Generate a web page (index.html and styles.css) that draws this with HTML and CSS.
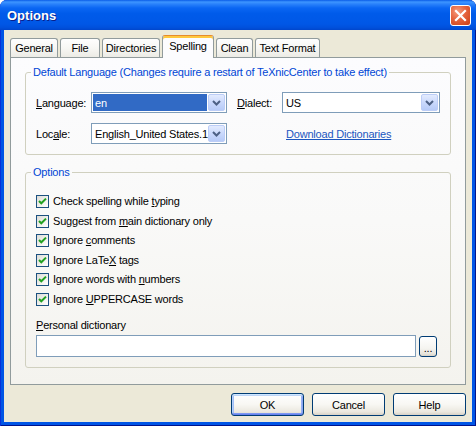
FILE: index.html
```html
<!DOCTYPE html>
<html>
<head>
<meta charset="utf-8">
<title>Options</title>
<link rel="stylesheet" href="styles.css">
</head>
<body>
<div class="window">
  <div class="titlebar">
    <span class="title">Options</span>
    <span class="close">
      <svg width="13" height="13" viewBox="0 0 13 13"><path d="M2 2 L11 11 M11 2 L2 11" stroke="#fff" stroke-width="2.2" stroke-linecap="square"/></svg>
    </span>
  </div>
  <div class="client">
    <div class="tabs">
      <div class="tab tab-general">General</div>
      <div class="tab tab-file">File</div>
      <div class="tab tab-dirs">Directories</div>
      <div class="tab tab-spelling selected">Spelling</div>
      <div class="tab tab-clean">Clean</div>
      <div class="tab tab-format">Text Format</div>
    </div>
    <div class="panel">
      <fieldset class="group group-lang">
        <legend>Default Language (Changes require a restart of TeXnicCenter to take effect)</legend>
        <div class="lang-grid">
          <span class="label"><u>L</u>anguage:</span>
          <div class="combo">
            <span class="value selected">en</span>
            <span class="arrow"><svg width="9" height="6" viewBox="0 0 9 6"><path d="M1 1 L4.5 4.5 L8 1" fill="none" stroke="#4d6185" stroke-width="2"/></svg></span>
          </div>
          <span></span>
          <span class="label"><u>D</u>ialect:</span>
          <div class="combo">
            <span class="value">US</span>
            <span class="arrow"><svg width="9" height="6" viewBox="0 0 9 6"><path d="M1 1 L4.5 4.5 L8 1" fill="none" stroke="#4d6185" stroke-width="2"/></svg></span>
          </div>
          <span class="label">Loc<u>a</u>le:</span>
          <div class="combo">
            <span class="value">English_United States.1</span>
            <span class="arrow"><svg width="9" height="6" viewBox="0 0 9 6"><path d="M1 1 L4.5 4.5 L8 1" fill="none" stroke="#4d6185" stroke-width="2"/></svg></span>
          </div>
          <span></span>
          <span></span>
          <a class="link">Download Dictionaries</a>
        </div>
      </fieldset>
      <fieldset class="group group-opts">
        <legend>Options</legend>
        <div class="checklist">
          <label class="check"><span class="cb"><svg width="11" height="11" viewBox="0 0 11 11"><path d="M2 5 L4.3 7.3 L9 2.6" fill="none" stroke="#21a121" stroke-width="2"/></svg></span><span class="ctext">Check spelling while <u>t</u>yping</span></label>
          <label class="check"><span class="cb"><svg width="11" height="11" viewBox="0 0 11 11"><path d="M2 5 L4.3 7.3 L9 2.6" fill="none" stroke="#21a121" stroke-width="2"/></svg></span><span class="ctext">Suggest from <u>m</u>ain dictionary only</span></label>
          <label class="check"><span class="cb"><svg width="11" height="11" viewBox="0 0 11 11"><path d="M2 5 L4.3 7.3 L9 2.6" fill="none" stroke="#21a121" stroke-width="2"/></svg></span><span class="ctext">Ignore <u>c</u>omments</span></label>
          <label class="check"><span class="cb"><svg width="11" height="11" viewBox="0 0 11 11"><path d="M2 5 L4.3 7.3 L9 2.6" fill="none" stroke="#21a121" stroke-width="2"/></svg></span><span class="ctext">Ignore LaTe<u>X</u> tags</span></label>
          <label class="check"><span class="cb"><svg width="11" height="11" viewBox="0 0 11 11"><path d="M2 5 L4.3 7.3 L9 2.6" fill="none" stroke="#21a121" stroke-width="2"/></svg></span><span class="ctext">Ignore words with <u>n</u>umbers</span></label>
          <label class="check"><span class="cb"><svg width="11" height="11" viewBox="0 0 11 11"><path d="M2 5 L4.3 7.3 L9 2.6" fill="none" stroke="#21a121" stroke-width="2"/></svg></span><span class="ctext">Ignore <u>U</u>PPERCASE words</span></label>
        </div>
        <div class="dict-label"><u>P</u>ersonal dictionary</div>
        <div class="dict-row">
          <div class="textbox"></div>
          <div class="browse">...</div>
        </div>
      </fieldset>
    </div>
    <div class="buttons">
      <div class="btn default">OK</div>
      <div class="btn">Cancel</div>
      <div class="btn">Help</div>
    </div>
  </div>
</div>
</body>
</html>
```
FILE: styles.css
```css
* { box-sizing: border-box; }

body {
  margin: 0;
  font-family: "Liberation Sans", Arial, sans-serif;
  font-size: 11px;
  letter-spacing: -0.2px;
  color: #000;
  background: #fff;
}

.window {
  width: 476px;
  height: 426px;
  background: #0055e5;
  border-radius: 7px 7px 0 0;
  display: flex;
  flex-direction: column;
  overflow: hidden;
  box-shadow: inset 1px 0 #0831d9, inset -1px 0 #00138c, inset 0 -1px #00138c;
}

.titlebar {
  height: 30px;
  flex: none;
  display: flex;
  align-items: center;
  padding: 0 5px 0 7px;
  background: linear-gradient(to bottom, #0a5ce8 0, #3d95ff 2px, #2a82fb 4px, #0a66f3 8px, #005bea 45%, #0057e6 80%, #0050dc 92%, #0046cc 100%);
}

.title {
  flex: 1;
  color: #fff;
  font-weight: bold;
  font-size: 13px;
  letter-spacing: 0;
  text-shadow: 1px 1px #0a1f8a;
  padding-top: 1px;
}

.close {
  width: 21px;
  height: 21px;
  border: 1px solid #fff;
  border-radius: 3px;
  background: radial-gradient(circle at 35% 30%, #f79c7e 0, #e5643e 45%, #cc3e13 100%);
  display: flex;
  align-items: center;
  justify-content: center;
}

.client {
  flex: 1;
  margin: 0 4px 4px;
  background: #ece9d8;
  padding: 5px 6px 0;
  display: flex;
  flex-direction: column;
}

.tabs {
  display: flex;
  align-items: flex-end;
  gap: 2px;
  height: 23px;
  margin-bottom: -1px;
  position: relative;
  z-index: 1;
}

.tab {
  height: 19px;
  margin-bottom: 1px;
  border: 1px solid #919b9c;
  border-bottom: none;
  border-radius: 3px 3px 0 0;
  background: linear-gradient(to bottom, #fefefe 0, #f7f7f4 50%, #ecebe5 100%);
  display: flex;
  align-items: center;
  justify-content: center;
  padding-bottom: 1px;
}

.tab-general { width: 48px; }
.tab-file { width: 40px; }
.tab-dirs { width: 58px; }
.tab-spelling { width: 52px; }
.tab-clean { width: 37px; }
.tab-format { width: 65px; }

.tab.selected {
  height: 23px;
  margin-bottom: 0;
  background: #fcfcfe;
  border-top-color: #e68b2c;
  box-shadow: inset 0 2px #ffc83c;
  padding-bottom: 3px;
}

.panel {
  height: 328px;
  flex: none;
  border: 1px solid #919b9c;
  background: linear-gradient(to bottom, #fcfcfe 0, #f9f9f8 50%, #f4f3ee 100%);
  padding: 8px 14px 0;
  display: flex;
  flex-direction: column;
  gap: 11px;
}

.group {
  margin: 0;
  border: 1px solid #d0d0bf;
  border-radius: 3px;
  padding: 13px 10px 10px;
  min-width: 0;
}

.group legend {
  color: #0046d5;
  line-height: 13px;
  padding: 0 2px;
  margin-left: -5px;
}

.lang-grid {
  display: grid;
  grid-template-columns: 55px 136px 10px 45px 158px;
  grid-template-rows: 21px 21px;
  row-gap: 10px;
  align-items: center;
}

.label { line-height: 13px; padding-top: 1px; }

.combo {
  height: 21px;
  border: 1px solid #7f9db9;
  background: #fff;
  display: flex;
  align-items: stretch;
  padding: 1px;
}

.combo .value {
  flex: 1;
  padding-left: 2px;
  display: flex;
  align-items: center;
  white-space: nowrap;
  overflow: hidden;
}

.combo .value.selected {
  background: #316ac5;
  color: #fff;
  margin-right: 1px;
}

.combo .arrow {
  width: 17px;
  flex: none;
  border: 1px solid #bccdf7;
  border-radius: 2px;
  background: linear-gradient(to bottom, #e3ebfe 0, #cad9fc 50%, #b7cbf8 100%);
  display: flex;
  align-items: center;
  justify-content: center;
}

.link {
  color: #1b56c0;
  text-decoration: underline;
  padding-left: 4px;
  white-space: nowrap;
}

.checklist {
  display: flex;
  flex-direction: column;
}

.check {
  height: 19.5px;
  display: flex;
  align-items: center;
  gap: 4px;
  white-space: nowrap;
}

.ctext { line-height: 13px; }

.cb {
  width: 13px;
  height: 13px;
  flex: none;
  border: 1px solid #1c5180;
  background: linear-gradient(135deg, #dcdcd7 0, #f2f2ee 60%, #ffffff 100%);
  display: flex;
  align-items: center;
  justify-content: center;
}

.dict-label {
  margin-top: 10px;
  line-height: 13px;
}

.dict-row {
  margin-top: 3px;
  display: flex;
  align-items: flex-start;
  gap: 3px;
}

.textbox {
  width: 380px;
  height: 22px;
  border: 1px solid #7f9db9;
  background: #fff;
}

.browse {
  width: 18px;
  height: 21px;
  margin-top: 1px;
  border: 1px solid #003c74;
  border-radius: 3px;
  background: linear-gradient(to bottom, #ffffff 0, #f5f4f0 60%, #e6e3da 90%, #d6d0c5 100%);
  display: flex;
  align-items: flex-end;
  justify-content: center;
  padding-bottom: 3px;
  line-height: 10px;
}

.buttons {
  margin-top: 8px;
  display: flex;
  justify-content: flex-end;
  gap: 8px;
}

.btn {
  width: 73px;
  height: 23px;
  border: 1px solid #003c74;
  border-radius: 3px;
  background: linear-gradient(to bottom, #ffffff 0, #f8f7f3 50%, #ebe8df 85%, #d8d2c6 100%);
  display: flex;
  align-items: center;
  justify-content: center;
}

.btn.default {
  box-shadow: inset 0 1px #cee7ff, inset 0 -1px #6982ee, inset 1px 0 #b5cff9, inset -1px 0 #8aa6f0,
              inset 0 2px #bcd4f6, inset 0 -2px #7d99f1, inset 2px 0 #a3c0f7, inset -2px 0 #98b2f4;
}
```
